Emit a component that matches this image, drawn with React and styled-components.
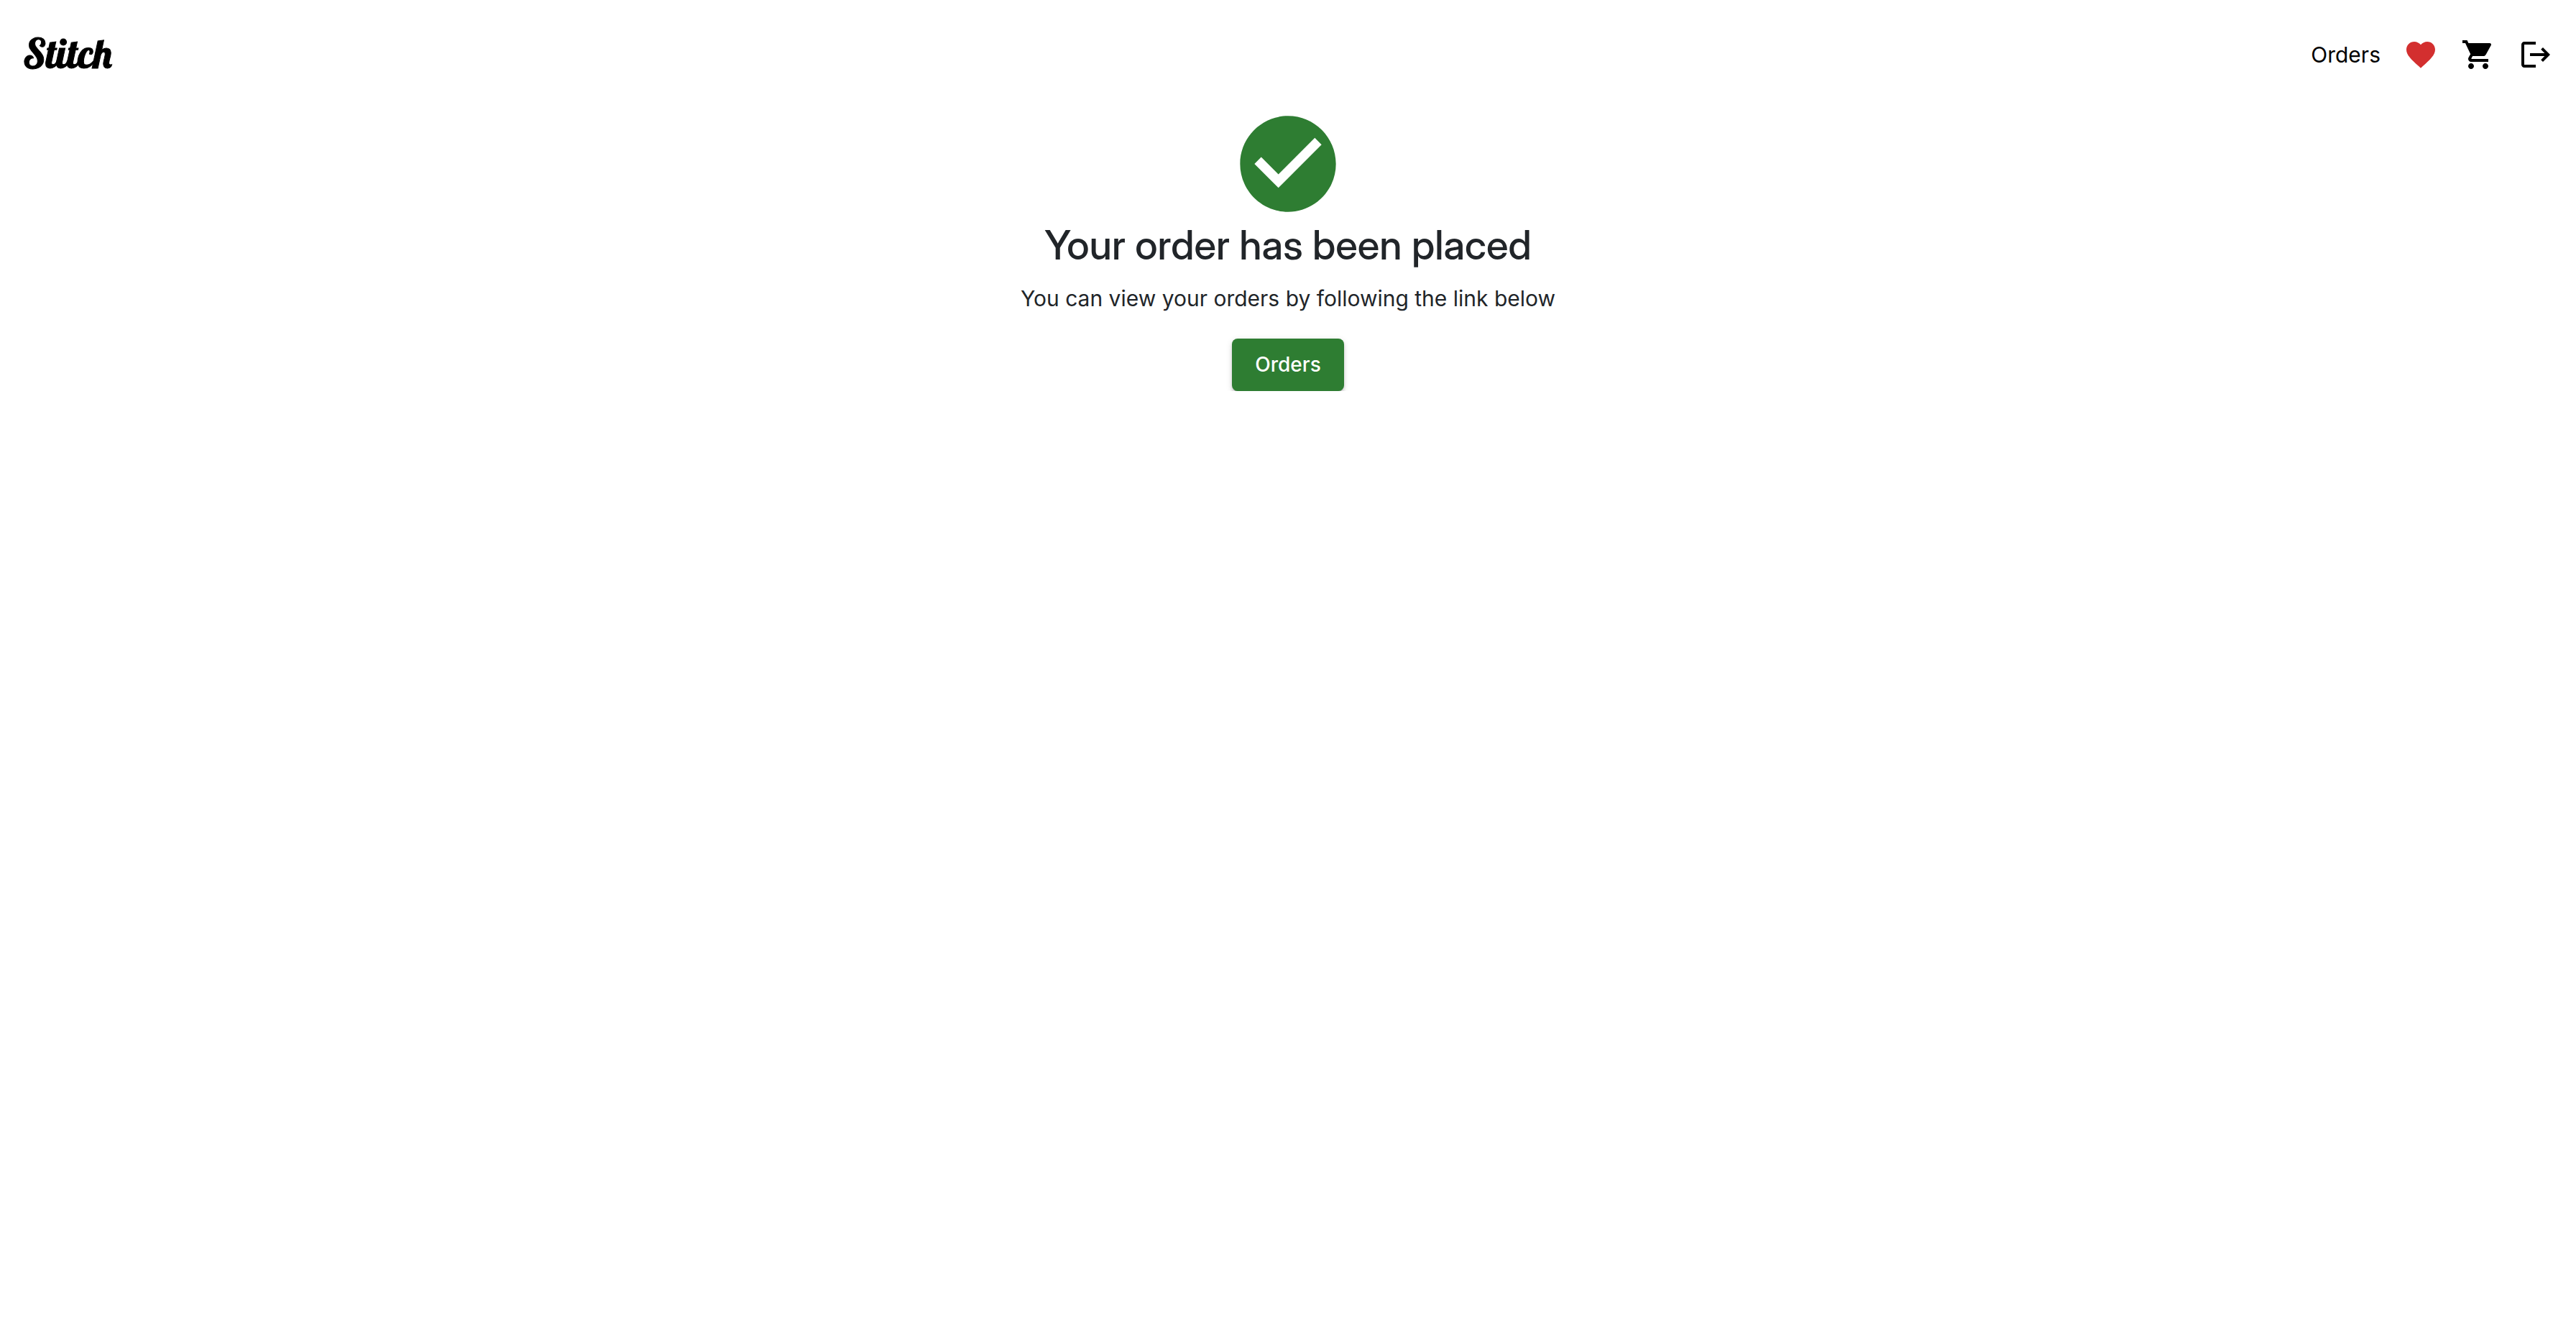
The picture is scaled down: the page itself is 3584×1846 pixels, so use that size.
import React from "react";
import styled, { createGlobalStyle } from "styled-components";

const GlobalStyle = createGlobalStyle`
  *, *::before, *::after { box-sizing: border-box; }
  body {
    margin: 0;
    background: #fff;
    color: #212529;
    font-family: Inter, "Liberation Sans", sans-serif;
    font-size: 30px;
    line-height: 48px;
  }
`;

const Header = styled.header`
  display: flex;
  align-items: flex-start;
  justify-content: space-between;
  padding: 52px 32px 48px;
`;

const Logo = styled.a`
  color: #000;
  font-family: Lobster, "Liberation Serif", serif;
  font-size: 56px;
  font-weight: 400;
  line-height: 44px;
  text-decoration: none;
  -webkit-text-stroke: 1px currentColor;
`;

const Nav = styled.nav`
  display: flex;
  align-items: center;
  gap: 32px;
`;

const NavLink = styled.a`
  display: flex;
  color: ${({ $color }) => $color || "#000"};
  text-decoration: none;
`;

const NavButton = styled.button`
  display: flex;
  padding: 0;
  border: 0;
  background: none;
  color: #000;
  cursor: pointer;
`;

const Icon = styled.svg`
  display: block;
  width: ${({ $size }) => $size}px;
  height: ${({ $size }) => $size}px;
  fill: currentColor;
`;

const Main = styled.main`
  display: flex;
  flex-direction: column;
  align-items: center;
  text-align: center;
`;

const Success = styled.div`
  color: #2e7d32;
`;

const Title = styled.h1`
  margin: 0 0 16px;
  font-family: "Inter Display", Inter, "Liberation Sans", sans-serif;
  font-size: 56px;
  font-weight: 500;
  line-height: 67px;
`;

const Message = styled.p`
  margin: 0 0 32px;
`;

const OrdersButton = styled.button`
  padding: 12px 32px;
  border: 0;
  border-radius: 8px;
  background: #2e7d32;
  color: #fff;
  font-family: inherit;
  font-size: 28px;
  font-weight: 500;
  line-height: 49px;
  cursor: pointer;
  box-shadow:
    0 6px 2px -4px rgba(0, 0, 0, 0.2),
    0 4px 4px 0 rgba(0, 0, 0, 0.14),
    0 2px 10px 0 rgba(0, 0, 0, 0.12);
`;

const paths = {
  heart:
    "m12 21.35-1.45-1.32C5.4 15.36 2 12.28 2 8.5 2 5.42 4.42 3 7.5 3c1.74 0 3.41.81 4.5 2.09C13.09 3.81 14.76 3 16.5 3 19.58 3 22 5.42 22 8.5c0 3.78-3.4 6.86-8.55 11.54z",
  cart:
    "M7 18c-1.1 0-1.99.9-1.99 2S5.9 22 7 22s2-.9 2-2-.9-2-2-2M1 2v2h2l3.6 7.59-1.35 2.45c-.16.28-.25.61-.25.96 0 1.1.9 2 2 2h12v-2H7.42c-.14 0-.25-.11-.25-.25l.03-.12.9-1.63h7.45c.75 0 1.41-.41 1.75-1.03l3.58-6.49c.08-.14.12-.31.12-.48 0-.55-.45-1-1-1H5.21l-.94-2zm16 16c-1.1 0-1.99.9-1.99 2s.89 2 1.99 2 2-.9 2-2-.9-2-2-2",
  logout:
    "m17 7-1.41 1.41L18.17 11H8v2h10.17l-2.58 2.58L17 17l5-5zM4 5h8V3H4c-1.1 0-2 .9-2 2v14c0 1.1.9 2 2 2h8v-2H4z",
  check:
    "M12 2C6.48 2 2 6.48 2 12s4.48 10 10 10 10-4.48 10-10S17.52 2 12 2m-2 15-5-5 1.41-1.41L10 14.17l7.59-7.59L19 8z",
};

function MaterialIcon({ name, size = 48 }) {
  return (
    <Icon $size={size} viewBox="0 0 24 24" aria-hidden="true">
      <path d={paths[name]} />
    </Icon>
  );
}

export default function App() {
  return (
    <>
      <GlobalStyle />
      <Header>
        <Logo href="#home">Stitch</Logo>
        <Nav>
          <NavLink href="#orders">Orders</NavLink>
          <NavLink href="#wishlist" aria-label="Wishlist" $color="#d32f2f">
            <MaterialIcon name="heart" />
          </NavLink>
          <NavLink href="#cart" aria-label="Cart">
            <MaterialIcon name="cart" />
          </NavLink>
          <NavButton type="button" aria-label="Log out">
            <MaterialIcon name="logout" />
          </NavButton>
        </Nav>
      </Header>
      <Main>
        <Success>
          <MaterialIcon name="check" size={160} />
        </Success>
        <Title>Your order has been placed</Title>
        <Message>You can view your orders by following the link below</Message>
        <OrdersButton type="button">Orders</OrdersButton>
      </Main>
    </>
  );
}
